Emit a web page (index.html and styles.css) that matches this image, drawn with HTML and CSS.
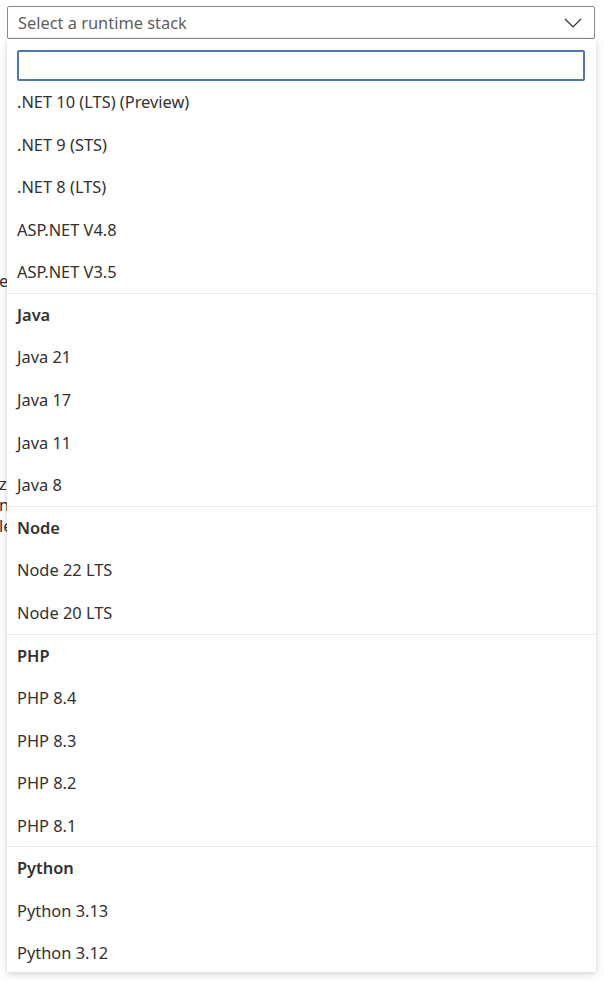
FILE: index.html
```html
<!DOCTYPE html>
<html lang="en">
<head>
    <meta charset="UTF-8">
    <meta name="viewport" content="width=device-width, initial-scale=1.0">
    <title>Runtime stack</title>
    <link rel="stylesheet" href="styles.css">
</head>
<body>
    <div class="page">
        <div class="bg-text">
            <p class="bg-line line-1">e</p>
            <p class="bg-line line-2">z</p>
            <p class="bg-line line-3">n</p>
            <p class="bg-line line-4">le</p>
        </div>

        <div class="dropdown">
            <div class="dropdown-title">
                <span>Select a runtime stack</span>
                <svg class="chevron" width="18" height="10" viewBox="0 0 18 10">
                    <path d="M1 1 L9 9 L17 1" fill="none" stroke="#323130" stroke-width="1.2"/>
                </svg>
            </div>

            <div class="dropdown-callout">
                <div class="search-wrap">
                    <input class="search" type="text">
                </div>

                <div class="group">
                    <div class="option">.NET 10 (LTS) (Preview)</div>
                    <div class="option">.NET 9 (STS)</div>
                    <div class="option">.NET 8 (LTS)</div>
                    <div class="option">ASP.NET V4.8</div>
                    <div class="option">ASP.NET V3.5</div>
                </div>

                <div class="group">
                    <div class="group-header">Java</div>
                    <div class="option">Java 21</div>
                    <div class="option">Java 17</div>
                    <div class="option">Java 11</div>
                    <div class="option">Java 8</div>
                </div>

                <div class="group">
                    <div class="group-header">Node</div>
                    <div class="option">Node 22 LTS</div>
                    <div class="option">Node 20 LTS</div>
                </div>

                <div class="group">
                    <div class="group-header">PHP</div>
                    <div class="option">PHP 8.4</div>
                    <div class="option">PHP 8.3</div>
                    <div class="option">PHP 8.2</div>
                    <div class="option">PHP 8.1</div>
                </div>

                <div class="group">
                    <div class="group-header">Python</div>
                    <div class="option">Python 3.13</div>
                    <div class="option last">Python 3.12</div>
                </div>
            </div>
        </div>
    </div>
</body>
</html>
```

FILE: styles.css
```css
body {
    margin: 0;
    background: #ffffff;
    color: #323130;
    font-family: 'Noto Sans', 'Open Sans', sans-serif;
    font-size: 16.4px;
    overflow: hidden;
}

.page {
    position: relative;
    height: 982px;
}

.bg-text {
    padding-top: 270px;
}

.bg-line {
    margin: 0;
    margin-left: -1px;
    height: 21px;
    line-height: 21px;
}

.line-2 {
    margin-top: 182px;
}

.dropdown {
    padding: 6px 9px 0 7px;
    position: absolute;
    top: 0;
    left: 0;
    right: 0;
}

.dropdown-title {
    height: 31px;
    border: 1px solid #8a8886;
    border-radius: 2px;
    display: flex;
    align-items: center;
    justify-content: space-between;
    padding: 0 12px 0 10px;
    color: #605e5c;
    background: #fff;
}

.chevron {
    margin-top: 1px;
}

.dropdown-callout {
    background: #fff;
    margin-right: -1px;
    box-shadow: 0 3px 8px rgba(0, 0, 0, 0.13), 0 0 3px rgba(0, 0, 0, 0.1);
}

.search-wrap {
    padding: 11px 11px 0 10px;
    height: 31px;
}

.search {
    box-sizing: border-box;
    width: 100%;
    height: 31px;
    margin: 0;
    border: 2px solid #4f76ad;
    border-radius: 2px;
    outline: none;
    font: inherit;
}

.group + .group {
    border-top: 1px solid #edebe9;
    margin-top: -1px;
}

.option,
.group-header {
    height: 42.58px;
    line-height: 42.58px;
    padding-left: 10px;
    white-space: nowrap;
}

.option.last {
    height: 39px;
    line-height: 40px;
}

.group-header {
    font-weight: 600;
}
```
